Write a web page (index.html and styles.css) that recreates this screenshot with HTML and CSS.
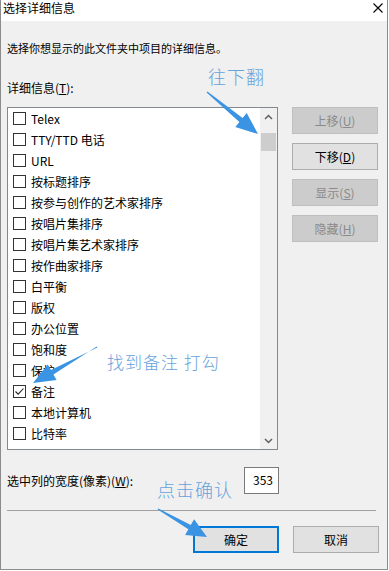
FILE: index.html
```html
<!DOCTYPE html>
<html lang="zh-CN">
<head>
    <meta charset="UTF-8">
    <meta name="viewport" content="width=device-width, initial-scale=1.0">
    <title>选择详细信息</title>
    <link rel="stylesheet" href="styles.css">
</head>
<body>
    <div class="window">
        <div class="titlebar">
            <span class="title">选择详细信息</span>
            <svg class="close" width="10" height="10" viewBox="0 0 10 10">
                <path d="M0.5 0.5 L9.5 9.5 M9.5 0.5 L0.5 9.5" stroke="#000" stroke-width="1.1" fill="none"/>
            </svg>
        </div>

        <div class="content">
            <p class="desc">选择你想显示的此文件夹中项目的详细信息。</p>
            <p class="label">详细信息(<u>T</u>):</p>

            <div class="main">
                <div class="listbox">
                    <ul class="items">
                        <li><span class="box"></span>Telex</li>
                        <li><span class="box"></span>TTY/TTD 电话</li>
                        <li><span class="box"></span>URL</li>
                        <li><span class="box"></span>按标题排序</li>
                        <li><span class="box"></span>按参与创作的艺术家排序</li>
                        <li><span class="box"></span>按唱片集排序</li>
                        <li><span class="box"></span>按唱片集艺术家排序</li>
                        <li><span class="box"></span>按作曲家排序</li>
                        <li><span class="box"></span>白平衡</li>
                        <li><span class="box"></span>版权</li>
                        <li><span class="box"></span>办公位置</li>
                        <li><span class="box"></span>饱和度</li>
                        <li><span class="box"></span>保护</li>
                        <li><span class="box checked"><svg width="11" height="11" viewBox="0 0 11 11"><path d="M1.5 5.5 L4.2 8.2 L9.5 2.5" stroke="#222" stroke-width="1.1" fill="none"/></svg></span>备注</li>
                        <li><span class="box"></span>本地计算机</li>
                        <li><span class="box"></span>比特率</li>
                    </ul>
                    <div class="scrollbar">
                        <span class="sb-arrow">
                            <svg width="9" height="6" viewBox="0 0 9 6"><path d="M1 5 L4.5 1.5 L8 5" stroke="#606060" stroke-width="1.5" fill="none"/></svg>
                        </span>
                        <span class="sb-thumb"></span>
                        <span class="sb-track"></span>
                        <span class="sb-arrow">
                            <svg width="9" height="6" viewBox="0 0 9 6"><path d="M1 1 L4.5 4.5 L8 1" stroke="#606060" stroke-width="1.5" fill="none"/></svg>
                        </span>
                    </div>
                </div>

                <div class="side">
                    <button class="btn" disabled>上移(<u>U</u>)</button>
                    <button class="btn">下移(<u>D</u>)</button>
                    <button class="btn" disabled>显示(<u>S</u>)</button>
                    <button class="btn" disabled>隐藏(<u>H</u>)</button>
                </div>
            </div>

            <div class="width-row">
                <span>选中列的宽度(像素)(<u>W</u>):</span>
                <input class="width-input" type="text" value="353">
            </div>

            <hr class="sep">

            <div class="footer">
                <button class="btn default">确定</button>
                <button class="btn">取消</button>
            </div>
        </div>

        <!-- annotations drawn over the dialog -->
        <div class="note note-scroll">往下翻</div>
        <div class="note note-check">找到备注 打勾</div>
        <div class="note note-ok">点击确认</div>
        <svg class="arrows" width="389" height="571" viewBox="0 0 389 571">
            <polygon points="207.4,91.5 242.6,118.1 246.7,113 258,134 235.3,127 239.4,121.9 206.6,92.5" fill="#3a93e3"/>
            <polygon points="97.3,347.6 51,370 47.8,364.4 33,383 56.6,380 53.4,374.4 96.7,346.4" fill="#3a93e3"/>
            <polygon points="157.7,509.5 188.4,529.3 185.1,534.9 207,537 194.1,519.3 190.8,524.9 158.3,508.5" fill="#3a93e3"/>
        </svg>
    </div>
</body>
</html>
```

FILE: styles.css
```css
body {
    margin: 0;
    font-family: "Noto Sans CJK SC", "Noto Sans", sans-serif;
    font-size: 12px;
    color: #000;
    background-color: #fff;
}
p {
    margin: 0;
}
.window {
    position: relative;
    width: 388px;
    height: 570px;
    box-sizing: border-box;
    border: 1px solid #8c8c8c;
    border-top: none;
    background-color: #f0f0f0;
    overflow: hidden;
}
.titlebar {
    height: 21px;
    background-color: #fff;
    display: flex;
    justify-content: space-between;
    align-items: flex-start;
}
.title {
    padding-left: 2px;
    line-height: 16px;
    font-size: 12px;
}
.close {
    margin-top: 3px;
    margin-right: 4px;
}
.content {
    padding-left: 6px;
}
.desc {
    margin-top: 19px;
    font-size: 11px;
    line-height: 16px;
}
.label {
    margin-top: 24px;
    line-height: 16px;
}
.main {
    display: flex;
    margin-top: 11px;
}
.listbox {
    width: 271px;
    height: 343px;
    box-sizing: border-box;
    border: 1px solid #828790;
    background-color: #fff;
    display: flex;
}
.items {
    flex: 1;
    list-style: none;
    margin: 0;
    padding: 0;
    overflow: hidden;
}
.items li {
    height: 21px;
    display: flex;
    align-items: center;
    padding-left: 5px;
    white-space: nowrap;
}
.box {
    width: 13px;
    height: 13px;
    box-sizing: border-box;
    border: 1px solid #333;
    margin-right: 5px;
    display: flex;
    align-items: center;
    justify-content: center;
    flex-shrink: 0;
}
.scrollbar {
    width: 17px;
    background-color: #f0f0f0;
    display: flex;
    flex-direction: column;
}
.sb-arrow {
    height: 17px;
    display: flex;
    align-items: center;
    justify-content: center;
}
.sb-thumb {
    height: 18px;
    margin: 8px 1px 0 1px;
    background-color: #cdcdcd;
}
.sb-track {
    flex: 1;
}
.side {
    margin-left: 14px;
    display: flex;
    flex-direction: column;
    gap: 9px;
}
.btn {
    width: 86px;
    height: 27px;
    box-sizing: border-box;
    border: 1px solid #adadad;
    background-color: #e1e1e1;
    font-family: inherit;
    font-size: 12px;
    color: #000;
    padding: 0;
}
.btn:disabled {
    background-color: #cccccc;
    border-color: #bfbfbf;
    color: #8a8a8a;
}
.btn.default {
    border: 2px solid #0078d7;
}
.width-row {
    display: grid;
    grid-template-columns: 237px 35px;
    align-items: center;
    margin-top: 17px;
}
.width-input {
    width: 35px;
    height: 27px;
    box-sizing: border-box;
    border: 1px solid #7a7a7a;
    background-color: #fff;
    font-family: inherit;
    font-size: 12px;
    text-align: right;
    padding: 0 5px 3px 0;
}
.sep {
    width: 369px;
    margin: 16px 0 0 0;
    border: none;
    border-top: 1px solid #a0a0a0;
    height: 0;
}
.footer {
    width: 372px;
    display: flex;
    justify-content: flex-end;
    gap: 14px;
    margin-top: 15px;
}
.note {
    position: absolute;
    color: #66a3dc;
    font-size: 18px;
    font-weight: 300;
    line-height: 20px;
    letter-spacing: 1px;
    white-space: nowrap;
}
.note-scroll {
    left: 207px;
    top: 66px;
}
.note-check {
    left: 106px;
    top: 352px;
    font-size: 17px;
}
.note-ok {
    left: 156px;
    top: 479px;
}
.arrows {
    position: absolute;
    left: -1px;
    top: 0;
    pointer-events: none;
}
```
